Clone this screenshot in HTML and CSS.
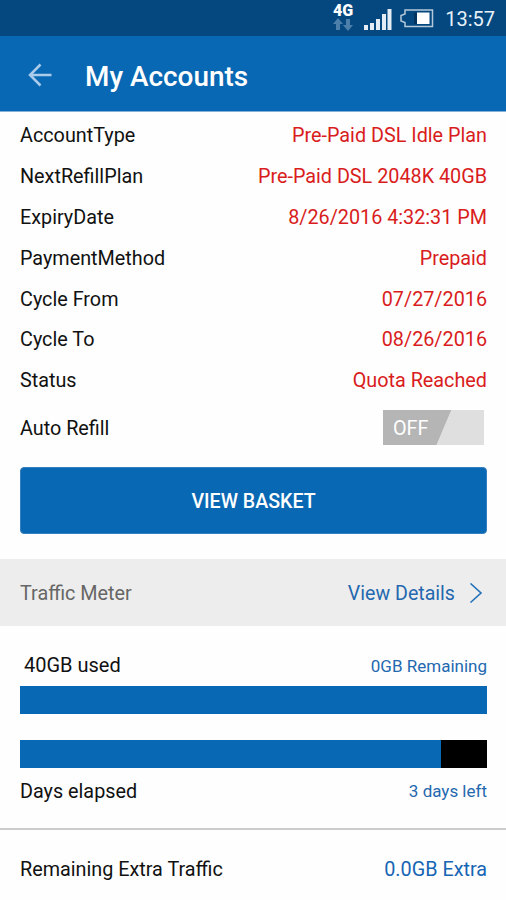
FILE: index.html
```html
<!DOCTYPE html>
<html lang="en">
<head>
<meta charset="utf-8">
<title>My Accounts</title>
<link rel="stylesheet" href="styles.css">
</head>
<body>
<div class="status-bar">
  <div class="network">
    <span class="network-label">4G</span>
    <svg width="20" height="13" viewBox="0 0 20 13"><path fill="#4c80ab" d="M5 0l5 6H7v6H3V6H0zM15 13l-5-6h3V1h4v6h3z"/></svg>
  </div>
  <svg class="signal" width="28" height="23" viewBox="0 0 28 23"><path fill="#e4edf5" d="M0 17h4v5H0zM6 15h4v7H6zM12 11h4v11h-4zM18 6h4v16h-4zM23.500 1h4v21h-4z"/></svg>
  <svg class="battery" width="34" height="19" viewBox="0 0 34 19"><path fill="none" stroke="#b4c8da" stroke-width="1.500" d="M5 1h27.500v16.500H5v-4L1 12V6.500L5 5z"/><path fill="#03335f" d="M14 3.500h3v11.500h-3z"/><path fill="#fff" d="M17 3.500h12.500v11.500H17z"/></svg>
  <span class="clock">13:57</span>
</div>
<header class="app-bar">
  <svg class="back" width="24" height="24" viewBox="0 0 24 24"><path fill="none" stroke="#abcbea" stroke-width="2.500" d="M23.500 12H2M12.500 1.500L2 12l10.500 10.500"/></svg>
  <h1 class="title">My Accounts</h1>
</header>
<main>
  <dl class="details">
    <div class="row"><dt>AccountType</dt><dd>Pre-Paid DSL Idle Plan</dd></div>
    <div class="row"><dt>NextRefillPlan</dt><dd>Pre-Paid DSL 2048K 40GB</dd></div>
    <div class="row"><dt>ExpiryDate</dt><dd>8/26/2016 4:32:31 PM</dd></div>
    <div class="row"><dt>PaymentMethod</dt><dd>Prepaid</dd></div>
    <div class="row"><dt>Cycle From</dt><dd>07/27/2016</dd></div>
    <div class="row"><dt>Cycle To</dt><dd>08/26/2016</dd></div>
    <div class="row"><dt>Status</dt><dd>Quota Reached</dd></div>
  </dl>
  <div class="refill"><span class="refill-label">Auto Refill</span><div class="toggle"><span class="toggle-state">OFF</span></div></div>
  <button class="basket">VIEW BASKET</button>
  <div class="meter-head">
    <span>Traffic Meter</span>
    <a class="view-details"><span>View Details</span><svg width="14" height="22" viewBox="0 0 14 22"><path fill="none" stroke="#2470b8" stroke-width="1.600" d="M1.500 .5L12 10 1.500 19.500"/></svg></a>
  </div>
  <section class="usage">
    <div class="usage-row used"><span class="used-label">40GB used</span><span class="note">0GB Remaining</span></div>
    <div class="bar"></div>
    <div class="bar days"><div class="rest"></div></div>
    <div class="usage-row elapsed"><span class="elapsed-label">Days elapsed</span><span class="note">3 days left</span></div>
  </section>
  <div class="extra"><span>Remaining Extra Traffic</span><span class="extra-value">0.0GB Extra</span></div>
</main>
</body>
</html>
```
FILE: styles.css
```css
* { box-sizing: border-box; }
body { margin: 0; height: 900px; overflow: hidden; background: #fefefe; color: #111; font: 19.8px/24px Roboto, sans-serif; }
svg { display: block; flex: none; }
.status-bar { height: 36px; padding-right: 11px; background: #04487f; display: flex; align-items: flex-start; justify-content: flex-end; color: #e8f1f9; }
.network { width: 22px; margin: 3px 10px 0 0; display: flex; flex-direction: column; align-items: center; }
.network-label { height: 15px; font-size: 16px; line-height: 15px; font-weight: 900; color: #fff; }
.signal { margin: 8px 8px 0 0; }
.battery { margin: 9px 11px 0 0; }
.clock { font-size: 20px; line-height: 24px; margin-top: 7px; }
.app-bar { height: 76px; padding-left: 28px; background: #0968b3; border-bottom: 1px solid #82b1d9; display: flex; align-items: center; }
.back { margin-top: 2px; }
.title { margin: 6px 0 0 33px; color: #fff; font-size: 27.9px; line-height: 32px; font-weight: 500; }
.details { margin: 0; padding: 3px 19px 0 20px; }
.row { height: 40.8px; padding-top: 2px; display: flex; align-items: center; justify-content: space-between; }
.row dd { margin: 0; color: #d91c20; }
.refill { height: 54px; padding: 0 22px 0 20px; display: flex; align-items: center; justify-content: space-between; }
.refill-label { padding-top: 2px; }
.toggle { width: 101px; height: 35px; padding: 2px 10px 0; display: flex; align-items: center; color: #fff; background: linear-gradient(113deg, #b5b5b5 0 58.500%, #dfdfdf 59.300%); }
.basket { display: block; width: 467px; height: 67px; margin: 12px 0 0 20px; padding: 4px 0 0; border: 1px solid #367fbe; border-radius: 4px; background: #0968b3; color: #fff; font: 500 19.6px/24px Roboto, sans-serif; }
.meter-head { height: 67px; margin-top: 25px; padding: 4px 23px 0 20px; background: #ededed; color: #666; display: flex; align-items: center; justify-content: space-between; }
.view-details { display: flex; align-items: center; gap: 14px; color: #2468af; font-size: 19.6px; }
.usage { height: 202px; padding: 27px 19px 0 20px; }
.usage-row { display: flex; align-items: center; justify-content: space-between; height: 24px; }
.used-label { padding-left: 4px; font-size: 20px; }
.used { margin-bottom: 9px; }
.note { font-size: 17px; color: #2468af; padding-top: 2px; }
.elapsed .note { padding-top: 1px; }
.elapsed-label { padding-top: 2px; }
.bar { height: 28px; background: #0968b3; }
.days { margin-top: 26px; display: flex; justify-content: flex-end; }
.rest { width: 46px; background: #000; }
.elapsed { margin-top: 11px; }
.extra { height: 72px; border-top: 2px solid #ccc; padding: 11px 19px 0 20px; display: flex; align-items: center; justify-content: space-between; }
.extra-value { color: #1665b4; }
```
